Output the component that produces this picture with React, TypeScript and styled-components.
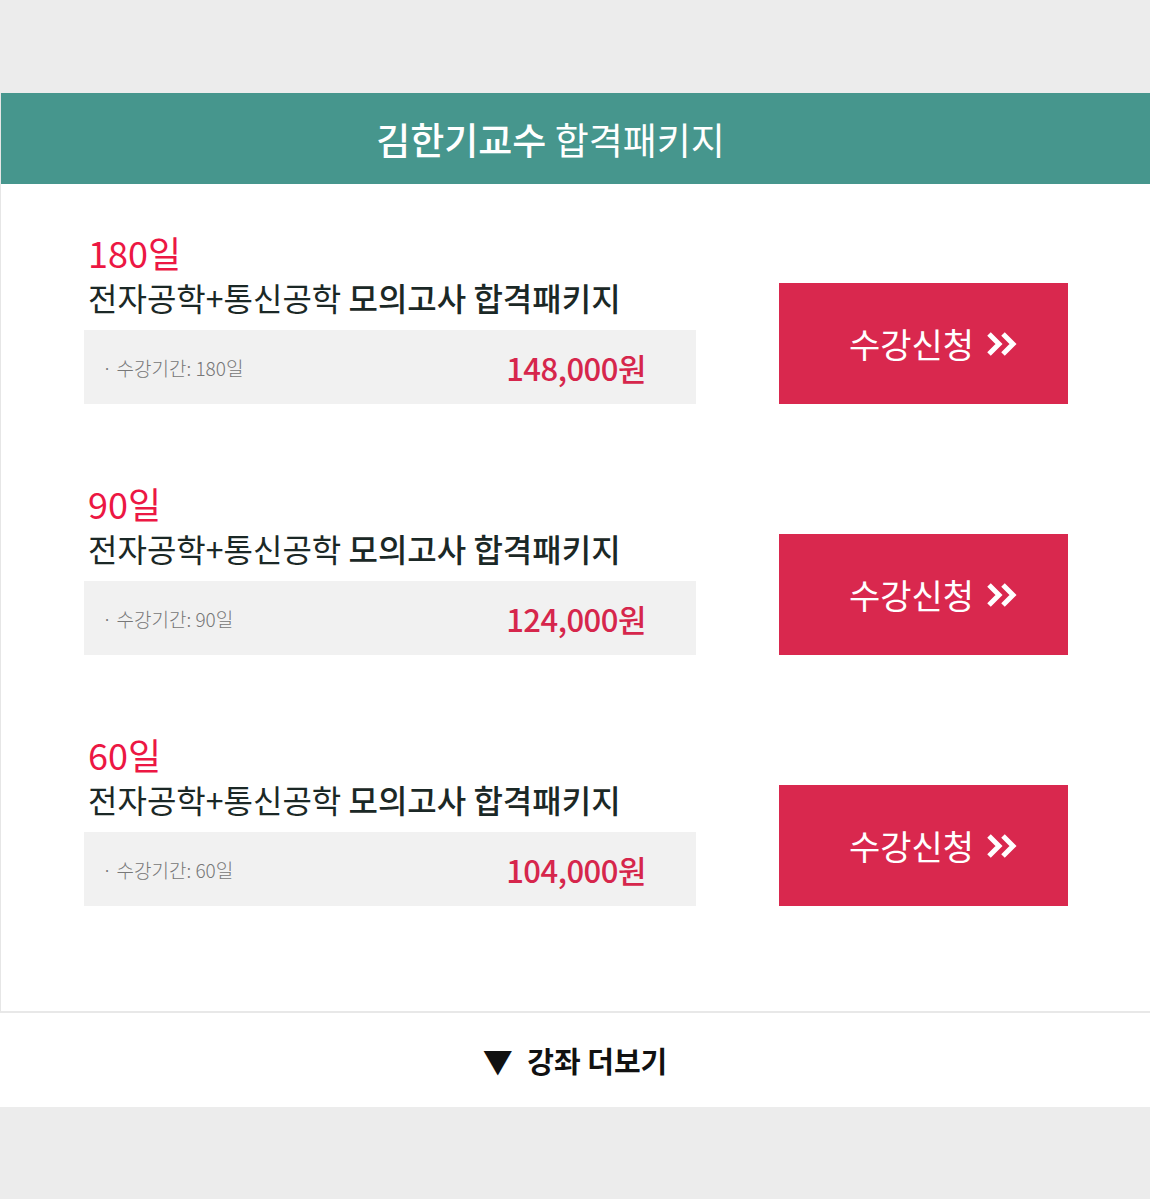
import styled, { createGlobalStyle } from 'styled-components';

const GlobalStyle = createGlobalStyle`
  body {
    margin: 0;
    background: #ececec;
    font-family: "Noto Sans CJK KR", "Noto Sans", sans-serif;
  }
`;

const packages = [
  { days: 180, price: '148,000' },
  { days: 90, price: '124,000' },
  { days: 60, price: '104,000' },
];

const Chevrons = () => (
  <svg width="32" height="26" viewBox="0 0 32 26">
    <path d="M3 3 L13 13 L3 23" fill="none" stroke="#fff" strokeWidth="5" strokeLinejoin="miter" />
    <path d="M17 3 L27 13 L17 23" fill="none" stroke="#fff" strokeWidth="5" strokeLinejoin="miter" />
  </svg>
);

const App = () => {
  return (
    <>
      <GlobalStyle />
      <StyledPage>
        <Panel>
          <Header>
            <strong>김한기교수</strong> 합격패키지
          </Header>
          <List>
            {packages.map((item) => (
              <Row key={item.days}>
                <Info>
                  <Days>{item.days}일</Days>
                  <Title>
                    전자공학+통신공학 <b>모의고사 합격패키지</b>
                  </Title>
                  <PriceBox>
                    <span className="period">· 수강기간: {item.days}일</span>
                    <span className="price">{item.price}원</span>
                  </PriceBox>
                </Info>
                <ApplyButton>
                  수강신청
                  <Chevrons />
                </ApplyButton>
              </Row>
            ))}
          </List>
        </Panel>
        <MoreBar>
          <span className="arrow">▼</span> 강좌 더보기
        </MoreBar>
      </StyledPage>
    </>
  );
};

export default App;

const StyledPage = styled.div`
  padding-top: 93px;
  height: 1199px;
  box-sizing: border-box;
`;

const Panel = styled.div`
  background: #fff;
  border-left: 1px solid #e6e6e6;
  border-bottom: 2px solid #e8e8e8;
`;

const Header = styled.h2`
  margin: 0;
  height: 91px;
  display: flex;
  align-items: center;
  justify-content: center;
  padding-right: 50px;
  background: #46968d;
  color: #fff;
  font-size: 37px;
  font-weight: 400;
  white-space: pre;
  > strong {
    font-weight: 500;
  }
`;

const List = styled.div`
  display: flex;
  flex-direction: column;
  gap: 79px;
  padding: 48px 0 105px 83px;
`;

const Row = styled.div`
  display: flex;
  align-items: flex-end;
  gap: 83px;
`;

const Info = styled.div`
  width: 612px;
`;

const Days = styled.div`
  padding-left: 4px;
  color: #ec1743;
  font-size: 36px;
  line-height: 40px;
`;

const Title = styled.div`
  padding-left: 4px;
  margin-top: 4px;
  color: #1b2826;
  font-size: 32px;
  line-height: 42px;
  white-space: nowrap;
  > b {
    font-weight: 500;
  }
`;

const PriceBox = styled.div`
  margin-top: 12px;
  height: 74px;
  display: flex;
  align-items: center;
  justify-content: space-between;
  padding: 0 50px 0 18px;
  background: #f1f1f1;
  > .period {
    color: #777;
    font-size: 19px;
    font-weight: 300;
  }
  > .price {
    color: #d6264c;
    font-size: 31px;
    font-weight: 500;
    letter-spacing: -0.5px;
  }
`;

const ApplyButton = styled.div`
  width: 289px;
  height: 121px;
  display: flex;
  align-items: center;
  justify-content: center;
  gap: 12px;
  padding-left: 20px;
  box-sizing: border-box;
  background: #d9284e;
  color: #fff;
  font-size: 34px;
  cursor: pointer;
`;

const MoreBar = styled.div`
  height: 94px;
  display: flex;
  align-items: center;
  justify-content: center;
  background: #fff;
  color: #111;
  font-size: 29px;
  font-weight: 700;
  white-space: pre;
  > .arrow {
    font-size: 30px;
    margin-right: 8px;
  }
`;
